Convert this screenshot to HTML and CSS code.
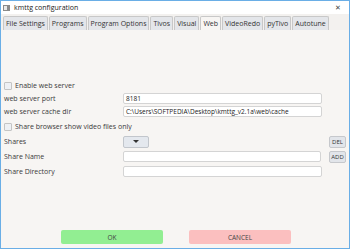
FILE: index.html
```html
<!DOCTYPE html>
<html lang="en">
<head>
  <meta charset="UTF-8">
  <title>kmttg configuration</title>
  <link rel="stylesheet" href="styles.css">
</head>
<body>
  <div class="window">
    <div class="titlebar">
      <span class="app-icon"><span></span></span>
      <span class="title">kmttg configuration</span>
      <span class="close">&#x2715;</span>
    </div>

    <div class="tabs">
      <span class="tab">File Settings</span>
      <span class="tab">Programs</span>
      <span class="tab">Program Options</span>
      <span class="tab">Tivos</span>
      <span class="tab">Visual</span>
      <span class="tab active">Web</span>
      <span class="tab">VideoRedo</span>
      <span class="tab">pyTivo</span>
      <span class="tab">Autotune</span>
    </div>

    <div class="content">
      <div class="form">
        <label class="row check"><span class="box"></span>Enable web server</label>

        <div class="row">
          <span class="label">web server port</span>
          <span class="field">8181</span>
        </div>
        <div class="row">
          <span class="label">web server cache dir</span>
          <span class="field">C:\Users\SOFTPEDIA\Desktop\kmttg_v2.1a\web\cache</span>
        </div>

        <label class="row check spaced"><span class="box"></span>Share browser show video files only</label>

        <div class="row spaced shares">
          <span class="label">Shares</span>
          <span class="combo"><span class="arrow"></span></span>
          <span class="small-btn">DEL</span>
        </div>
        <div class="row spaced">
          <span class="label">Share Name</span>
          <span class="field"></span>
          <span class="small-btn">ADD</span>
        </div>
        <div class="row spaced">
          <span class="label">Share Directory</span>
          <span class="field"></span>
        </div>
      </div>

      <div class="actions">
        <span class="btn ok">OK</span>
        <span class="btn cancel">CANCEL</span>
      </div>
    </div>
  </div>
</body>
</html>
```

FILE: styles.css
```css
* {
  box-sizing: border-box;
}

body {
  margin: 0;
  font-family: "Open Sans", "Noto Sans", sans-serif;
  font-size: 7px;
  color: #3a3a3a;
}

.window {
  width: 350px;
  height: 249px;
  border: 1px solid #6aaee6;
  display: flex;
  flex-direction: column;
  background-color: #f7f5f3;
}

.titlebar {
  height: 13px;
  background-color: #fff;
  display: flex;
  align-items: center;
  padding: 0 8px 0 2px;
  color: #222;
}

.app-icon {
  width: 7px;
  height: 6px;
  background-color: #8a8a8a;
  margin-right: 4px;
  position: relative;
}

.app-icon span {
  position: absolute;
  left: 1px;
  top: 1px;
  width: 3px;
  height: 4px;
  background-color: #e8e8e8;
}

.title {
  flex: 1;
}

.close {
  font-size: 7px;
  color: #444;
}

.tabs {
  display: flex;
  padding: 2px 0 0 2px;
  height: 16px;
  background-color: #f3f1ef;
}

.tab {
  border: 1px solid #c8c8c8;
  border-bottom: none;
  background-color: #e4e6ea;
  padding: 0 2px;
  margin-right: 1px;
  line-height: 13px;
  border-radius: 2px 2px 0 0;
  color: #333;
}

.tab.active {
  background-color: #f7f5f3;
  height: 14px;
}

.content {
  flex: 1;
  display: flex;
  flex-direction: column;
  padding: 49px 3px 4px 3px;
}

.form {
  flex: 1;
  display: flex;
  flex-direction: column;
}

.row {
  display: flex;
  align-items: center;
  height: 13px;
}

.spaced {
  margin-top: 2px;
}

.box {
  width: 8px;
  height: 8px;
  border: 1px solid #c4c4c4;
  background-color: #eef0f4;
  border-radius: 1px;
  margin-right: 3px;
}

.label {
  width: 119px;
}

.field {
  width: 199px;
  height: 11px;
  border: 1px solid #d4d4d4;
  background-color: #fff;
  border-radius: 2px;
  padding: 0 2px;
  line-height: 9px;
  font-size: 6.5px;
  color: #222;
}

.combo {
  width: 26px;
  height: 12px;
  border: 1px solid #c2c6cc;
  border-radius: 2px;
  background-color: #e4e8ee;
  display: flex;
  justify-content: center;
  align-items: center;
}

.arrow {
  width: 0;
  height: 0;
  border-left: 3px solid transparent;
  border-right: 3px solid transparent;
  border-top: 3px solid #333;
}

.shares .small-btn {
  margin-left: 180px;
}

.small-btn {
  margin-left: 8px;
  width: 17px;
  height: 12px;
  border: 1px solid #c6c8cc;
  border-radius: 2px;
  background-color: #e2e5ea;
  font-size: 6px;
  display: flex;
  align-items: center;
  justify-content: center;
  color: #333;
}

.actions {
  display: flex;
  padding-left: 57px;
  gap: 26px;
}

.btn {
  width: 102px;
  height: 14px;
  border-radius: 2px;
  display: flex;
  align-items: center;
  justify-content: center;
  font-size: 6.5px;
  color: #444;
}

.ok {
  background-color: #92ee92;
}

.cancel {
  background-color: #fbbfbf;
}
```
